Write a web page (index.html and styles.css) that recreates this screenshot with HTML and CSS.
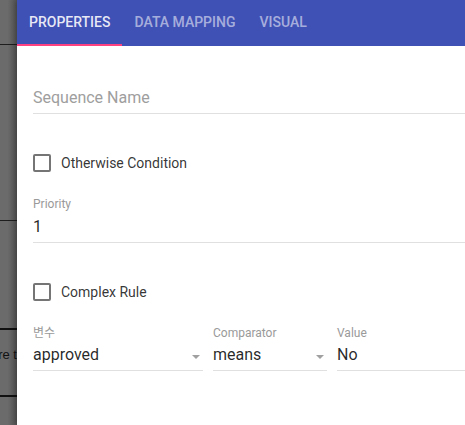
FILE: index.html
```html
<!DOCTYPE html>
<html>
<head>
<meta charset="utf-8">
<link rel="stylesheet" href="styles.css">
</head>
<body>
<div class="page">
  <div class="backdrop">
    <div class="bd-seg bd-1"></div>
    <div class="bd-seg bd-2"></div>
    <div class="bd-seg bd-3"></div>
    <div class="bd-seg bd-4"><span class="bd-text">re t</span></div>
    <div class="bd-seg bd-5"></div>
  </div>
  <aside class="drawer">
    <nav class="tabs">
      <div class="tab active">Properties</div>
      <div class="tab">Data Mapping</div>
      <div class="tab">Visual</div>
    </nav>
    <div class="form">
      <div class="field seq"><div class="input placeholder">Sequence Name</div></div>
      <div class="check check-first"><span class="box"></span><span class="check-label">Otherwise Condition</span></div>
      <div class="field priority"><div class="flabel">Priority</div><div class="input">1</div></div>
      <div class="check"><span class="box"></span><span class="check-label">Complex Rule</span></div>
      <div class="rule-row">
        <div class="field f-var"><div class="flabel ko">변수</div><div class="input">approved<span class="arrow"></span></div></div>
        <div class="field f-cmp"><div class="flabel">Comparator</div><div class="input">means<span class="arrow"></span></div></div>
        <div class="field f-val"><div class="flabel">Value</div><div class="input">No</div></div>
      </div>
    </div>
  </aside>
</div>
</body>
</html>
```

FILE: styles.css
```css
html, body {
  margin: 0;
  padding: 0;
  height: 100%;
  overflow: hidden;
}
body {
  font-family: Roboto, "Noto Sans", sans-serif;
  background: #fff;
}
.page {
  display: flex;
  height: 425px;
}
.backdrop {
  width: 17px;
  flex: none;
  background: linear-gradient(to right, #6b6b6b 45%, #555555);
  overflow: hidden;
}
.bd-seg {
  border-bottom: 1px solid #1e1e1e;
}
.bd-1 { height: 44px; }
.bd-2 { height: 175px; }
.bd-3 { height: 107px; border-bottom-width: 2px; border-color: #111; }
.bd-4 {
  border-bottom: 2px solid #111;
  box-sizing: border-box;
  height: 67px;
  padding-top: 17px;
  display: flex;
  justify-content: flex-end;
  white-space: nowrap;
}
.bd-5 { border: none; }
.bd-text {
  font-family: "Liberation Sans", Arial, sans-serif;
  font-size: 13px;
  line-height: 16px;
  color: #111;
}
.drawer {
  flex: 1;
  background: #fff;
  box-shadow: -2px 0 6px rgba(0,0,0,0.25);
  display: flex;
  flex-direction: column;
}
.tabs {
  display: flex;
  background: #3f51b5;
  height: 46px;
}
.tab {
  height: 46px;
  box-sizing: border-box;
  padding: 0 12px;
  display: flex;
  align-items: center;
  font-size: 14px;
  font-weight: 500;
  text-transform: uppercase;
  color: rgba(255,255,255,0.55);
  border-bottom: 2px solid transparent;
}
.tab.active {
  color: rgba(255,255,255,0.88);
  border-bottom-color: #ff4081;
}
.form {
  padding-left: 16px;
}
.field {
  border-bottom: 1px solid #e0e0e0;
  padding-bottom: 5px;
}
.seq { margin-top: 42px; }
.input {
  font-size: 16px;
  line-height: 20px;
  color: rgba(0,0,0,0.85);
  display: flex;
  justify-content: space-between;
}
.input.placeholder {
  color: #9e9e9e;
}
.flabel {
  font-size: 12px;
  line-height: 14px;
  color: #9a9a9a;
  margin-bottom: 6px;
}
.flabel.ko {
  font-family: Roboto, "Noto Sans CJK KR", sans-serif;
}
.f-var .flabel, .f-cmp .flabel, .f-val .flabel {
  margin-bottom: 5px;
}
.check {
  display: flex;
  align-items: center;
  height: 18px;
  margin-top: 40px;
}
.box {
  width: 18px;
  height: 18px;
  box-sizing: border-box;
  border: 2px solid #757575;
  border-radius: 2px;
  flex: none;
}
.check-label {
  margin-left: 10px;
  font-size: 14px;
  color: rgba(0,0,0,0.8);
}
.priority { margin-top: 25px; }
.rule-row {
  display: flex;
  gap: 10px;
  margin-top: 25px;
}
.f-var { width: 170px; }
.f-cmp { width: 114px; }
.f-val { flex: 1; }
.arrow {
  align-self: flex-start;
  margin-top: 10px;
  margin-right: 3px;
  width: 0;
  height: 0;
  border-left: 4px solid transparent;
  border-right: 4px solid transparent;
  border-top: 4px solid #a0a0a0;
}
```
